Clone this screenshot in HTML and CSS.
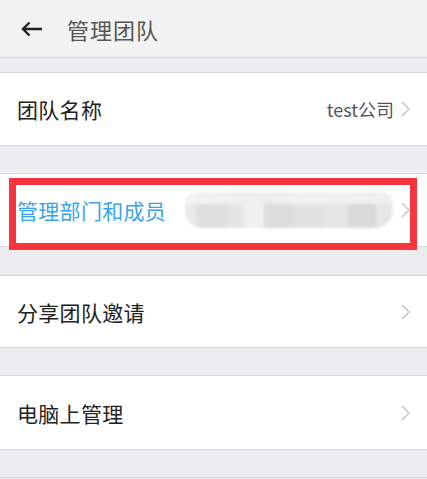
FILE: index.html
```html
<!DOCTYPE html>
<html lang="zh">
<head>
<meta charset="utf-8">
<link rel="stylesheet" href="styles.css">
</head>
<body>
<div class="app">
  <header class="topbar">
    <svg class="back" width="23" height="16" viewBox="0 0 23 16"><path d="M22 8H3M9.5 1.5L3 8l6.5 6.5" fill="none" stroke="#222" stroke-width="2.4"/></svg>
    <span class="title">管理团队</span>
  </header>
  <div class="gap g1"></div>
  <div class="row r1">
    <span class="label">团队名称</span>
    <span class="value">test公司</span>
    <svg class="chev" width="9" height="16" viewBox="0 0 9 16"><path d="M1 1l7 7-7 7" fill="none" stroke="#c4c4c8" stroke-width="1.5"/></svg>
  </div>
  <div class="gap"></div>
  <div class="row r2">
    <span class="label blue">管理部门和成员</span>
    <div class="blur"><span class="b1"></span><span class="b2"></span></div>
    <svg class="chev" width="9" height="16" viewBox="0 0 9 16"><path d="M1 1l7 7-7 7" fill="none" stroke="#c4c4c8" stroke-width="1.5"/></svg>
    <div class="mark"></div>
  </div>
  <div class="gap g3"></div>
  <div class="row r3">
    <span class="label">分享团队邀请</span>
    <svg class="chev" width="9" height="16" viewBox="0 0 9 16"><path d="M1 1l7 7-7 7" fill="none" stroke="#c4c4c8" stroke-width="1.5"/></svg>
  </div>
  <div class="gap"></div>
  <div class="row r4">
    <span class="label">电脑上管理</span>
    <svg class="chev" width="9" height="16" viewBox="0 0 9 16"><path d="M1 1l7 7-7 7" fill="none" stroke="#c4c4c8" stroke-width="1.5"/></svg>
  </div>
  <div class="gap last"></div>
</div>
</body>
</html>
```
FILE: styles.css
```css
html, body {
  margin: 0;
  padding: 0;
}
body {
  background: #ededf1;
  font-family: "Noto Sans CJK SC", "Noto Sans", sans-serif;
  width: 427px;
  height: 479px;
  overflow: hidden;
}
.app {
  display: flex;
  flex-direction: column;
}
.topbar {
  height: 57px;
  background: #f2f2f2;
  border-bottom: 1px solid #d4d4d4;
  display: flex;
  align-items: center;
}
.back {
  margin-left: 20px;
}
.title {
  margin-left: 24px;
  font-size: 22px;
  color: #555;
  letter-spacing: 1px;
}
.gap {
  height: 27px;
  background: #ededf1;
}
.gap.g1 { height: 14px; }
.gap.g3 { height: 28px; }
.gap.last { height: 27px; border-bottom: 1px solid #d8d8dc; }
.row {
  position: relative;
  background: #fff;
  border-top: 1px solid #d8d8dc;
  border-bottom: 1px solid #d8d8dc;
  height: 72px;
  display: flex;
  align-items: center;
  padding: 0 17px;
}
.r3 { height: 71px; }
.r4 { height: 73px; }
.label {
  font-size: 21px;
  color: #222;
  flex: 1;
  letter-spacing: 0.3px;
}
.label.blue {
  color: #3aa4ea;
  flex: none;
}
.value {
  font-size: 18px;
  color: #555;
  margin-right: 7px;
}
.blur {
  flex: 1;
  position: relative;
  height: 36px;
  margin: 0 8px 0 19px;
  filter: blur(1.5px);
}
.b1 {
  position: absolute;
  left: 0; right: 0; top: 0; bottom: 0;
  border-radius: 18px;
  background: linear-gradient(90deg, #e9e9e9 0, #e9e9e9 6%, #dedede 6%, #dedede 20%, #e4e4e4 20%, #e4e4e4 28%, #f0f0f0 28%, #f0f0f0 38%, #dcdcdc 38%, #dcdcdc 52%, #e2e2e2 52%, #e2e2e2 66%, #e6e6e6 66%, #e6e6e6 78%, #dadada 78%, #dadada 92%, #e6e6e6 92%);
}
.b2 {
  position: absolute;
  left: 0; right: 0; top: 0; height: 12px;
  border-radius: 18px 18px 0 0;
  background: linear-gradient(90deg, #f3f3f3, #ececec 40%, #f2f2f2 60%, #eeeeee);
}
.mark {
  position: absolute;
  left: 9px;
  right: 10px;
  top: 4px;
  height: 72px;
  border: 7px solid #f8353d;
  box-sizing: border-box;
}
```
